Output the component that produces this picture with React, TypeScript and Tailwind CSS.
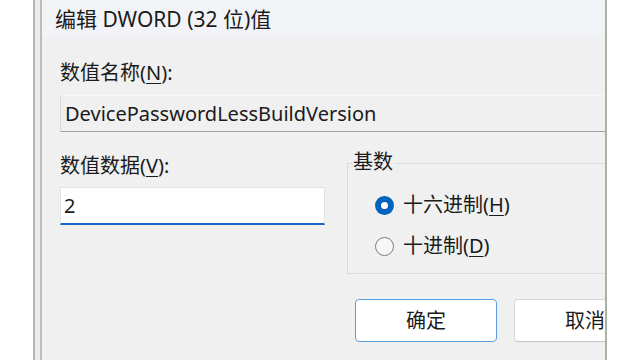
import React from "react";

const F = { fontFamily: '"Segoe UI", "Noto Sans", "Noto Sans CJK SC", sans-serif' };

function U({ c }: { c: string }) {
  return <span className="underline underline-offset-[3px] decoration-1">{c}</span>;
}

export default function App() {
  return (
    <div className="w-[640px] h-[360px] bg-white flex overflow-hidden text-[#1b1b1b]" style={F}>
      <div className="w-[33px] shrink-0" />
      <div className="w-[2px] shrink-0 bg-[#b3b3b3]" />
      <div className="w-[5px] shrink-0 bg-[#ebebeb]" />
      <div className="w-[2px] shrink-0 bg-[#bcbcbc]" />
      <div className="w-[563px] shrink-0 overflow-hidden flex flex-col bg-[#f0f0f0]">
        <div className="h-[38px] shrink-0 bg-[#f2f3f7] pl-[13px] flex items-center text-[21px] leading-[28px]">
          编辑 DWORD (32 位)值
        </div>
        <div className="flex-1 pl-[18px] flex flex-col text-[20px]">
          <div className="mt-[23px] leading-[24px] h-[24px]">
            数值名称(<U c="N" />):
          </div>
          <div className="mt-[10px] w-[620px] h-[37px] border-t border-t-[#f7f7f7] border-l border-l-[#d9d9d9] border-b border-b-[#a3a3a3] pl-[4px] flex items-center leading-[24px]">
            DevicePasswordLessBuildVersion
          </div>
          <div className="flex gap-[22px]">
            <div className="w-[265px] shrink-0 flex flex-col">
              <div className="mt-[22px] leading-[24px] h-[24px]">
                数值数据(<U c="V" />):
              </div>
              <div className="mt-[9px] h-[38px] bg-white border border-[#e3e3e3] border-b-2 border-b-[#1668c6] pl-[3px] flex items-center leading-[24px]">
                2
              </div>
            </div>
            <div className="flex flex-col">
              <div className="relative mt-[31px] w-[300px] h-[111px] border border-[#dadada]">
                <div className="absolute left-[5px] top-[-14px] leading-[24px] bg-[#f0f0f0] pr-[2px]">基数</div>
                <div className="flex flex-col pl-[27px] pt-[30px] gap-[19px]">
                  <div className="flex items-center gap-[9px] h-[22px] leading-[24px]">
                    <span className="w-[19px] h-[19px] rounded-full bg-[#0063bd] flex items-center justify-center shrink-0">
                      <span className="w-[7px] h-[7px] rounded-full bg-white" />
                    </span>
                    <span>十六进制(<U c="H" />)</span>
                  </div>
                  <div className="flex items-center gap-[9px] h-[22px] leading-[24px]">
                    <span className="w-[19px] h-[19px] rounded-full border border-[#7b7b7b] bg-[#f7f7f7] shrink-0" />
                    <span>十进制(<U c="D" />)</span>
                  </div>
                </div>
              </div>
              <div className="flex gap-[17px] mt-[25px] ml-[8px]">
                <div className="w-[142px] h-[43px] rounded-[4px] bg-white border-[1.5px] border-[#5c9de0] flex items-center justify-center leading-[24px]">
                  确定
                </div>
                <div className="w-[142px] h-[43px] rounded-[4px] bg-white border border-[#d6d6d6] border-b-[#c4c4c4] flex items-center justify-center leading-[24px]">
                  取消
                </div>
              </div>
            </div>
          </div>
        </div>
      </div>
      <div className="w-[2px] shrink-0 bg-[#a7b3a2]" />
    </div>
  );
}
